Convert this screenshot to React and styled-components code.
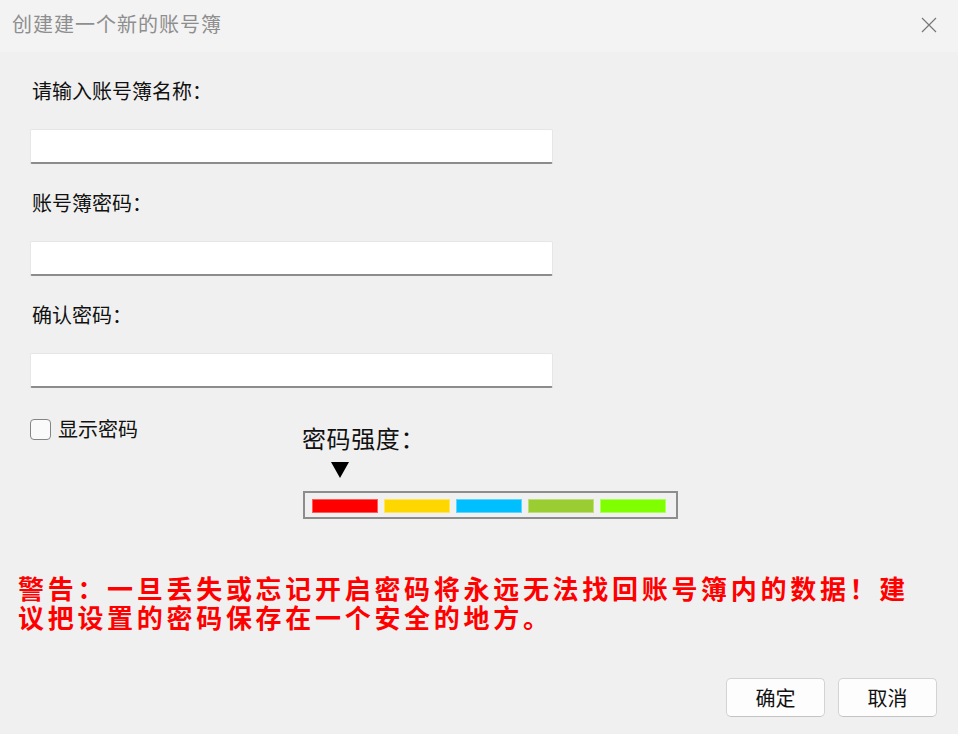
import React, { useState } from "react";
import styled, { createGlobalStyle } from "styled-components";

const Global = createGlobalStyle`
  html, body { margin: 0; padding: 0; background: #f0f0f0; }
  * { box-sizing: border-box; }
  body { font-family: "Noto Sans CJK SC", "Noto Sans", sans-serif; }
`;

const Window = styled.div`
  width: 958px;
  height: 734px;
  background: #f0f0f0;
  display: flex;
  flex-direction: column;
  overflow: hidden;
`;

const TitleBar = styled.div`
  height: 52px;
  flex: none;
  background: #f3f3f3;
  display: flex;
  align-items: center;
  justify-content: space-between;
  padding: 0 21px 4px 12px;
`;

const Title = styled.div`
  font-size: 20px;
  letter-spacing: 1px;
  line-height: 24px;
  color: #8e8e8e;
`;

const CloseButton = styled.button`
  width: 16px;
  height: 16px;
  padding: 0;
  border: none;
  background: transparent;
  display: flex;
  margin-top: 2px;
`;

const Form = styled.div`
  display: flex;
  flex-direction: column;
  padding: 27px 0 0 30px;
`;

const Label = styled.div`
  font-size: 20px;
  line-height: 24px;
  color: #111;
  padding-left: 2px;
  margin-top: ${(p) => p.$top || 0}px;
`;

const Input = styled.input`
  width: 523px;
  height: 35px;
  margin-top: 26px;
  background: #ffffff;
  border: 1px solid #e6e6e6;
  border-bottom: 2px solid #8c8c8c;
  border-radius: 2px;
  outline: none;
  font-size: 18px;
  padding: 0 8px;
`;

const OptionsRow = styled.div`
  display: flex;
  align-items: flex-start;
  margin-top: 30px;
`;

const CheckLabel = styled.label`
  display: flex;
  align-items: center;
  gap: 7px;
  width: 272px;
  font-size: 20px;
  line-height: 22px;
  color: #111;
  cursor: pointer;
`;

const Box = styled.span`
  width: 21px;
  height: 21px;
  border: 1.5px solid #858585;
  border-radius: 4px;
  background: ${(p) => (p.$on ? "#005fb8" : "#fafafa")};
  display: inline-flex;
  align-items: center;
  justify-content: center;
`;

const Strength = styled.div`
  display: flex;
  flex-direction: column;
  margin-top: 6px;
`;

const StrengthTitle = styled.div`
  font-size: 24px;
  line-height: 28px;
  letter-spacing: 0.6px;
  color: #111;
`;

const Pointer = styled.div`
  width: 0;
  height: 0;
  margin: 10px 0 0 29px;
  border-left: 9px solid transparent;
  border-right: 9px solid transparent;
  border-top: 16px solid #000;
`;

const Meter = styled.div`
  margin-top: 13px;
  margin-left: 1px;
  width: 375px;
  height: 28px;
  border: 2px solid #8d8d8d;
  display: flex;
  align-items: center;
  gap: 6px;
  padding: 1px 9px 0 7px;
`;

const Segment = styled.div`
  width: 66px;
  height: 14px;
  background: ${(p) => p.$color};
  box-shadow: inset 0 0 0 1px rgba(255, 255, 255, 0.35);
`;

const Warning = styled.div`
  margin: 54px 0 0 18px;
  width: 910px;
  font-size: 26px;
  line-height: 29px;
  letter-spacing: 3.7px;
  font-weight: 700;
  color: #ff0000;
`;

const Footer = styled.div`
  margin-top: auto;
  display: flex;
  justify-content: flex-end;
  gap: 13px;
  padding: 0 21px 17px 0;
`;

const Button = styled.button`
  width: 99px;
  height: 39px;
  background: #fdfdfd;
  border: 1px solid #d3d3d3;
  border-bottom-color: #c4c4c4;
  border-radius: 5px;
  font-family: "Noto Sans CJK SC", sans-serif;
  font-size: 20px;
  color: #111;
  padding: 0;
`;

const colors = ["#ff0000", "#ffd700", "#00bfff", "#9acd32", "#7fff00"];

export default function App() {
  const [show, setShow] = useState(false);
  const type = show ? "text" : "password";
  return (
    <Window>
      <Global />
      <TitleBar>
        <Title>创建建一个新的账号簿</Title>
        <CloseButton aria-label="关闭">
          <svg width="16" height="16" viewBox="0 0 16 16">
            <path d="M1 1 L15 15 M15 1 L1 15" stroke="#777" strokeWidth="1.2" fill="none" />
          </svg>
        </CloseButton>
      </TitleBar>
      <Form>
        <Label>请输入账号簿名称：</Label>
        <Input type="text" />
        <Label $top={27}>账号簿密码：</Label>
        <Input type={type} />
        <Label $top={27}>确认密码：</Label>
        <Input type={type} />
        <OptionsRow>
          <CheckLabel onClick={() => setShow(!show)}>
            <Box $on={show}>
              {show && (
                <svg width="12" height="12" viewBox="0 0 12 12">
                  <path d="M2 6 L5 9 L10 3" stroke="#fff" strokeWidth="1.6" fill="none" />
                </svg>
              )}
            </Box>
            显示密码
          </CheckLabel>
          <Strength>
            <StrengthTitle>密码强度：</StrengthTitle>
            <Pointer />
            <Meter>
              {colors.map((c) => (
                <Segment key={c} $color={c} />
              ))}
            </Meter>
          </Strength>
        </OptionsRow>
      </Form>
      <Warning>
        警告：一旦丢失或忘记开启密码将永远无法找回账号簿内的数据！建议把设置的密码保存在一个安全的地方。
      </Warning>
      <Footer>
        <Button>确定</Button>
        <Button>取消</Button>
      </Footer>
    </Window>
  );
}
